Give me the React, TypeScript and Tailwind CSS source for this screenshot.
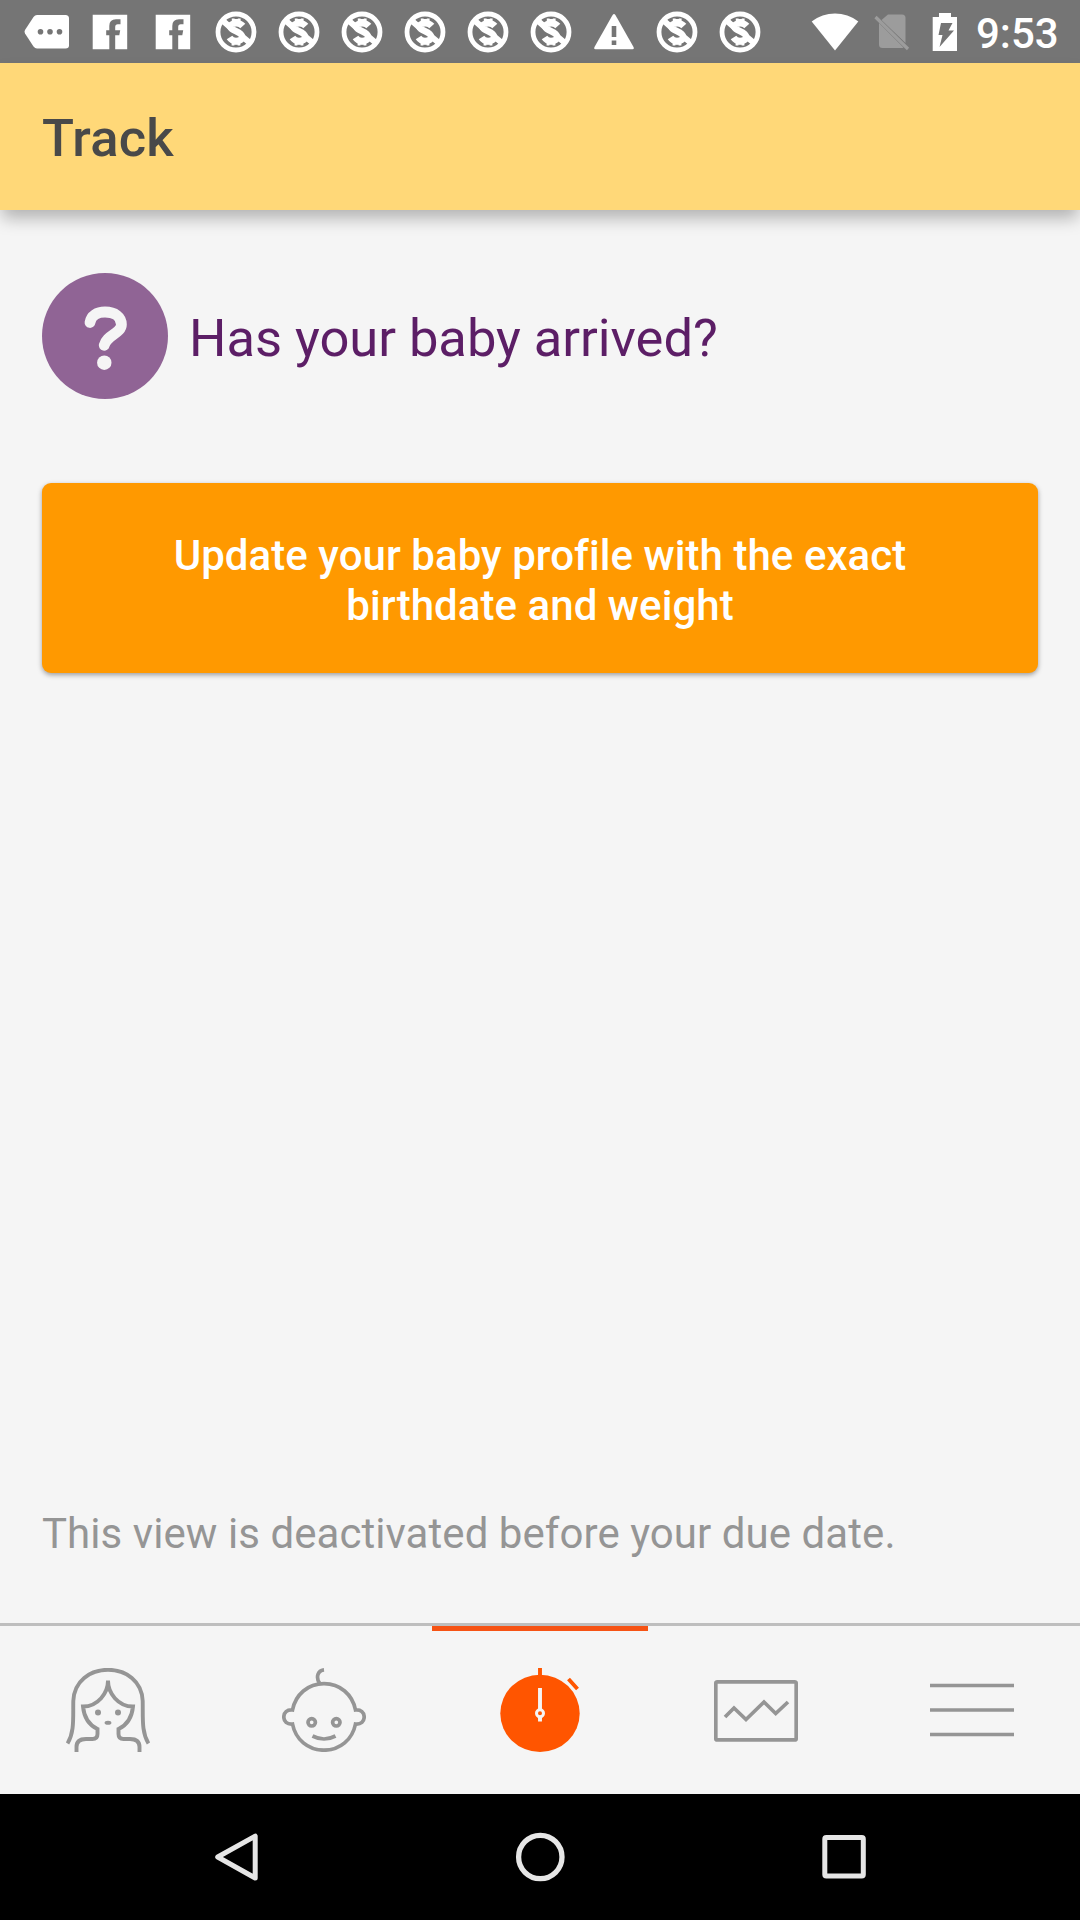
import React from 'react';

function MoreTag() {
  return (
    <svg className="block h-[36px] w-[46px]" viewBox="0 0 46 36">
      <path d="M13 1H41.5Q45 1 45 4.500V31.500Q45 34.500 41.500 34.500H13Q11 34.500 9.500 32.500L1 19.500Q0 17.700 1 16L9.500 3Q11 1 13 1Z" fill="#fff" />
      <circle cx="16.500" cy="17.700" r="2.800" fill="#757575" />
      <circle cx="26" cy="17.700" r="2.800" fill="#757575" />
      <circle cx="35.500" cy="17.700" r="2.800" fill="#757575" />
    </svg>
  );
}

function Facebook() {
  return (
    <svg className="block h-[36px] w-[36px]" viewBox="0 0 36 36">
      <path d="M.7.700H35.200V35.200H23.200V21.200H27.300L28.200 16.200H23.200V13Q23.200 10.200 25.800 10.200H28.500V5.300H24Q17.300 5.300 17.300 12V16.200H14.200V21.200H17.300V35.200H.7Z" fill="#fff" />
    </svg>
  );
}

function NoMoney() {
  return (
    <svg className="block h-[42px] w-[42px]" viewBox="0 0 42 42" fill="none" stroke="#fff">
      <circle cx="21" cy="21" r="18" strokeWidth="4.800" />
      <path d="M7 9L16 17M26 24.500L35 32" strokeWidth="6" />
      <path d="M27.800 15Q25.500 12.300 21.500 12.300C17 12.300 14.800 14.300 15.600 16.500C17 20 26.500 20.500 27 25.500C27.200 28.700 24.500 30 21 30Q16.800 30 14.500 26.500" strokeWidth="6.600" />
      <path d="M18.200 7.500V11M24.200 7.500V11M18 30.500V34.500M24 30.500V34.500" strokeWidth="2.800" />
      <path d="M18 9.700H24.500M18 32H24.500" strokeWidth="3.600" />
    </svg>
  );
}

function Warning() {
  return (
    <svg className="block h-[36px] w-[40px]" viewBox="0 0 40 36">
      <path d="M18.600 1Q20 -.8 21.400 1L39.500 33Q40.500 35.200 38.500 35.200H1.500Q-.5 35.200 .5 33Z" fill="#fff" />
      <path d="M17.700 12H22.300V23H17.700ZM17.700 26.500H22.300V31H17.700Z" fill="#757575" />
    </svg>
  );
}

const slots = ['more', 'fb', 'fb', 'no', 'no', 'no', 'no', 'no', 'no', 'warn', 'no', 'no'];

function StatusBar() {
  return (
    <div className="flex h-[63px] shrink-0 items-center bg-[#757575] pl-[15.500px]">
      {slots.map((s, i) => (
        <div key={i} className="flex w-[63px] items-center justify-center">
          {s === 'more' ? <MoreTag /> : s === 'fb' ? <Facebook /> : s === 'warn' ? <Warning /> : <NoMoney />}
        </div>
      ))}
      <svg className="ml-[39px] block h-[38px] w-[48px]" viewBox="0 0 48 38">
        <path d="M.7 8.500C14 -2.200 34 -2.200 47.300 8.500L24 37.500Z" fill="#fff" />
      </svg>
      <svg className="ml-[15px] block h-[38px] w-[36px]" viewBox="0 0 36 38">
        <path d="M14 1.500H28Q31.500 1.500 31.500 5V30L7.500 7ZM5 10L29.500 34.500Q28.500 35 27.500 35H8.500Q5 35 5 31.500Z" fill="#9c9c9c" />
        <path d="M1.500 4L34 36" stroke="#9c9c9c" strokeWidth="3.200" />
      </svg>
      <svg className="ml-[22px] block h-[38px] w-[26px]" viewBox="0 0 26 38">
        <path d="M7 0H19V4H25V38H.7V4H7Z" fill="#fff" />
        <path d="M9 10H20.500L16.500 17.500H22L7.500 34L10.500 22H6.500Z" fill="#757575" />
      </svg>
      <span className="ml-[18.500px] mt-[4px] text-[42px] font-medium leading-none text-white">9:53</span>
    </div>
  );
}

function Mother() {
  return (
    <svg className="block h-[84px] w-[84px]" viewBox="0 0 84 84" fill="none" stroke="#959595" strokeWidth="3.900">
      <path d="M1.500 75.500C8.500 64 7 51 7.300 33C8 13 24 1.800 42 1.800S76 13 76.700 33C77 51 75.500 64 82.500 75.500" />
      <path d="M42 12.500C42 25 32 38.500 17 38.500C18 49 23 57 31.500 61V66Q31.500 71 26.500 71H20Q10.500 71 10.500 79V84M42 12.500C42 25 52 38.500 67 38.500C66 49 61 57 52.500 61V66Q52.500 71 57.500 71H64Q73.500 71 73.500 79V84" />
      <circle cx="32" cy="44.500" r="3" fill="#959595" stroke="none" />
      <circle cx="52" cy="44.500" r="3" fill="#959595" stroke="none" />
      <ellipse cx="42" cy="54.700" rx="3.400" ry="2" fill="#959595" stroke="none" />
    </svg>
  );
}

function Baby() {
  return (
    <svg className="block h-[84px] w-[84px]" viewBox="0 0 84 84" fill="none" stroke="#959595" strokeWidth="3.700">
      <path d="M10.500 42C13.500 26.500 26 15.700 42 15.700S70.500 26.500 73.500 42C79 41.500 82.200 44.500 82.200 49S79 56.500 73.500 56C70.500 71.500 58 82.200 42 82.200S13.500 71.500 10.500 56C5 56.500 1.800 53.500 1.800 49S5 41.500 10.500 42Z" />
      <path d="M42 1.800C36 2.500 33.500 9 37.500 15" />
      <circle cx="29.700" cy="54.300" r="3.700" />
      <circle cx="54.300" cy="54.300" r="3.700" />
      <path d="M30.500 68Q42 74 53.500 68" />
    </svg>
  );
}

function Stopwatch() {
  return (
    <svg className="block h-[84px] w-[84px]" viewBox="0 0 84 84">
      <ellipse cx="42" cy="45.400" rx="39.700" ry="38.600" fill="#ff5500" />
      <path d="M42 0V10M70.500 11L79.500 21" stroke="#ff5500" strokeWidth="3.900" />
      <path d="M42 20V42M42 47V53.500" stroke="#f5f5f5" strokeWidth="3.900" />
      <path d="M38.200 47.500L42 53L45.800 47.500" fill="#f5f5f5" />
      <circle cx="42" cy="45.300" r="3.500" fill="#ff5500" stroke="#f5f5f5" strokeWidth="3" />
    </svg>
  );
}

function Chart() {
  return (
    <svg className="block h-[84px] w-[84px]" viewBox="0 0 84 84" fill="none" stroke="#959595" strokeWidth="3.700">
      <rect x="1.800" y="13.900" width="80.400" height="58" rx="1.500" />
      <path d="M11 49L20 40L32 51.500L50 34L61.700 45.500L74 34" />
    </svg>
  );
}

function Menu() {
  return (
    <svg className="block h-[84px] w-[84px]" viewBox="0 0 84 84" stroke="#959595" strokeWidth="3.700">
      <path d="M0 17.500H84M0 42H84M0 66.500H84" />
    </svg>
  );
}

export default function App() {
  return (
    <div className="flex h-[1920px] w-[1080px] flex-col overflow-hidden bg-[#f5f5f5] font-[Roboto,sans-serif]">
      <StatusBar />
      <header className="flex h-[147px] shrink-0 items-center bg-[#ffd878] pl-[42px] shadow-[0_10px_16px_-2px_rgba(0,0,0,0.28)]">
        <h1 className="mt-[4px] text-[52.500px] font-medium leading-none tracking-[0.2px] text-[#494949]">Track</h1>
      </header>
      <main className="flex flex-1 flex-col px-[42px] pt-[63px]">
        <div className="flex h-[126px] items-center">
          <svg className="block h-[126px] w-[126px]" viewBox="0 0 126 126">
            <circle cx="63" cy="63" r="63" fill="#906495" />
            <path d="M48 49.500C49 42.500 55 39 63 39C73 39 79.400 44 79.400 51.500C79.400 60.500 64.500 62 62.200 72.300" fill="none" stroke="#f5f5f5" strokeWidth="10.800" strokeLinecap="round" strokeLinejoin="round" />
            <circle cx="62.300" cy="89.700" r="7.200" fill="#f5f5f5" />
          </svg>
          <p className="ml-[21px] mt-[4px] text-[52.500px] leading-none tracking-[-0.04px] text-[#5c1e66]">Has your baby arrived?</p>
        </div>
        <button className="mt-[84px] h-[190px] w-full rounded-[9px] bg-[#ff9900] pt-[5px] text-center text-[42px] font-medium leading-[50px] tracking-[0.05px] text-white shadow-[0_2px_5px_rgba(0,0,0,0.36)]">
          Update your baby profile with the exact<br />birthdate and weight
        </button>
        <p className="mb-[64px] mt-auto text-[42px] leading-[50px] tracking-[0.06px] text-[#959595]">This view is deactivated before your due date.</p>
      </main>
      <nav className="grid h-[171px] shrink-0 grid-cols-5 border-t-[3px] border-[#bebebe]">
        <div className="flex justify-center pt-[42px]"><Mother /></div>
        <div className="flex justify-center pt-[42px]"><Baby /></div>
        <div className="flex justify-center border-t-[5px] border-[#f65314] pt-[37px]"><Stopwatch /></div>
        <div className="flex justify-center pt-[42px]"><Chart /></div>
        <div className="flex justify-center pt-[42px]"><Menu /></div>
      </nav>
      <div className="flex h-[126px] shrink-0 items-center justify-between bg-black px-[212px]">
        <svg className="block h-[50px] w-[48px]" viewBox="0 0 48 50" fill="none" stroke="#e6e6e6" strokeWidth="5" strokeLinejoin="round">
          <path d="M43.200 4.200V46L5.700 25Z" />
        </svg>
        <svg className="block h-[50px] w-[50px]" viewBox="0 0 50 50" fill="none" stroke="#e6e6e6" strokeWidth="5.300">
          <circle cx="25.300" cy="25" r="21.700" />
        </svg>
        <svg className="block h-[50px] w-[48px]" viewBox="0 0 48 50" fill="none" stroke="#e6e6e6" strokeWidth="5">
          <rect x="4.800" y="5.500" width="38.500" height="38.500" rx="1.500" />
        </svg>
      </div>
    </div>
  );
}
